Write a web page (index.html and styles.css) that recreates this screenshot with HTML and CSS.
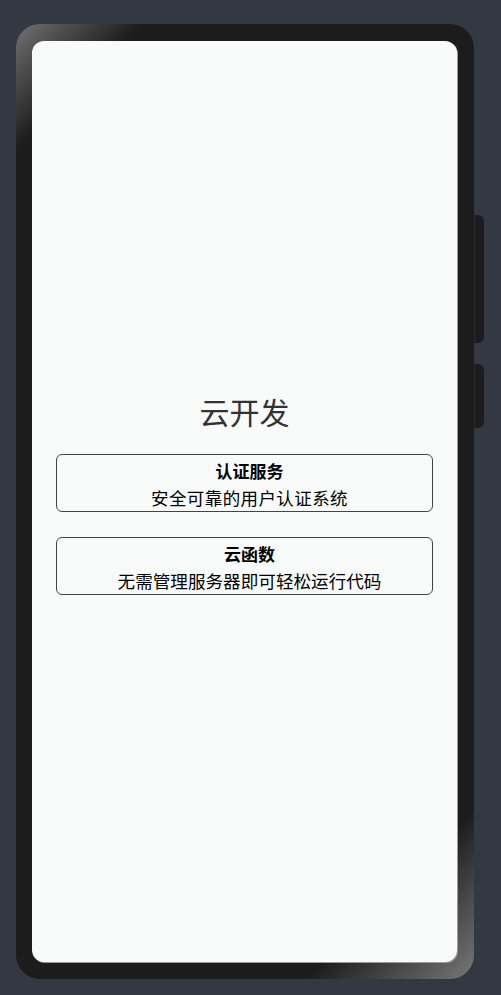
FILE: index.html
```html
<!DOCTYPE html>
<html lang="zh-cn">

<head>
    <meta charset="UTF-8">
    <meta name="viewport" content="width=device-width, initial-scale=1.0">
    <title>云开发</title>
    <link rel="stylesheet" href="styles.css">
</head>

<body>
    <div class="phone">
        <div class="side-key key-volume"></div>
        <div class="side-key key-power"></div>
        <div class="screen">
            <div class="page-title">云开发</div>
            <div class="card">
                <div class="card-title">认证服务</div>
                <div class="card-desc wide">安全可靠的用户认证系统</div>
            </div>
            <div class="card">
                <div class="card-title">云函数</div>
                <div class="card-desc">无需管理服务器即可轻松运行代码</div>
            </div>
        </div>
    </div>
</body>

</html>
```

FILE: styles.css
```css
html,
body {
    margin: 0;
    padding: 0;
}

body {
    width: 501px;
    height: 995px;
    background-color: #333842;
    font-family: "Noto Sans CJK SC", "Noto Sans", sans-serif;
    overflow: hidden;
}

.phone {
    position: relative;
    box-sizing: border-box;
    width: 458px;
    height: 955px;
    margin: 24px 0 0 16px;
    padding: 17px 17px 17px 16px;
    border-radius: 24px;
    background: linear-gradient(135deg, #727272 0%, #1c1c1c 9%, #1c1c1c 88%, #777 100%);
}

.side-key {
    position: absolute;
    left: 458px;
    width: 9px;
    background-color: #1c1c1c;
    border-left: 1px solid #2a2a2a;
    border-radius: 0 6px 6px 0;
}

.key-volume {
    top: 191px;
    height: 128px;
}

.key-power {
    top: 340px;
    height: 64px;
}

.screen {
    display: flex;
    flex-direction: column;
    justify-content: center;
    align-items: stretch;
    height: 100%;
    box-sizing: border-box;
    padding: 0 24px 17px 24px;
    border-radius: 12px;
    background-color: #f9fbfa;
    box-shadow: 1px 1px 0 #9a9a9a;
}

.page-title {
    text-align: center;
    font-size: 30px;
    line-height: 40px;
    color: #333;
    margin-bottom: 23px;
}

.card {
    box-sizing: border-box;
    height: 58px;
    padding: 3px 0 0 10px;
    border: 1px solid #444;
    border-radius: 6px;
    text-align: center;
    color: #000;
}

.card + .card {
    margin-top: 25px;
}

.card-title {
    font-size: 17px;
    font-weight: bold;
    line-height: 26px;
}

.card-desc {
    font-size: 17.6px;
    line-height: 27px;
}

.card-desc.wide {
    font-size: 17.5px;
    letter-spacing: 0.4px;
}
```
